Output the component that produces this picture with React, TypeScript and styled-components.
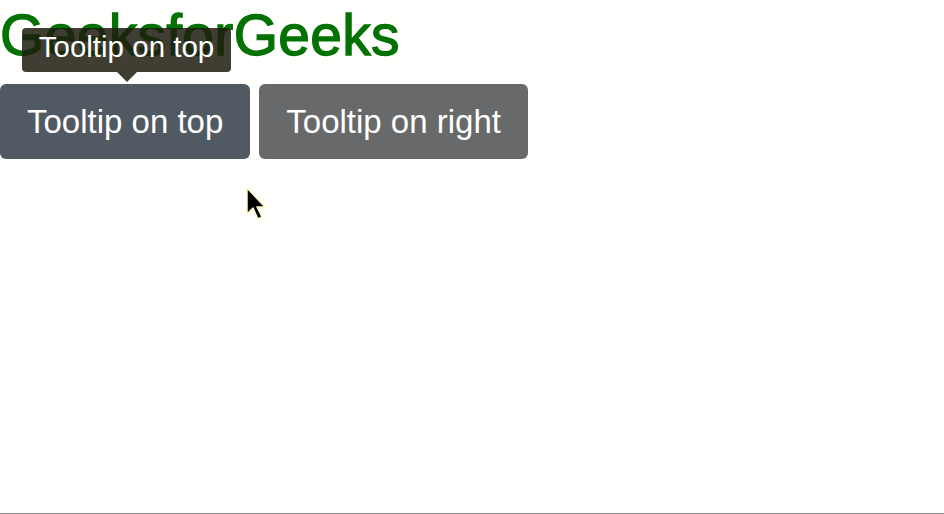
import React from 'react';
import styled, { createGlobalStyle } from 'styled-components';

const GlobalStyle = createGlobalStyle`
  html, body {
    margin: 0;
    padding: 0;
    background: #fffffe;
    font-family: "Liberation Sans", Arial, sans-serif;
  }
`;

const Page = styled.div`
  position: relative;
  height: 514px;
  box-sizing: border-box;
  border-bottom: 1px solid #8a8a8a;
  overflow: hidden;
`;

const Title = styled.h1`
  margin: 0 0 14px 0;
  font-size: 57px;
  line-height: 70px;
  font-weight: 400;
  color: #037203;
  -webkit-text-stroke: 1.3px #037203;
  letter-spacing: 0.3px;
`;

const ButtonRow = styled.div`
  display: flex;
  gap: 9px;
`;

const TipAnchor = styled.div`
  position: relative;
`;

const Button = styled.button<{ $active?: boolean }>`
  height: 75px;
  padding: 0 27px;
  border: none;
  border-radius: 6px;
  background: ${(p) => (p.$active ? '#515a62' : '#68696a')};
  color: #ffffff;
  font-family: "Liberation Sans", Arial, sans-serif;
  font-size: 33px;
  cursor: pointer;
`;

const Tooltip = styled.div`
  position: absolute;
  left: 22px;
  bottom: 100%;
  margin-bottom: 2px;
  width: 209px;
  height: 54px;
  display: flex;
  flex-direction: column;
  align-items: center;
`;

const TipBox = styled.div`
  width: 100%;
  height: 44px;
  border-radius: 4px;
  background: rgba(30, 28, 14, 0.85);
  color: #ffffff;
  font-size: 29.5px;
  display: flex;
  align-items: center;
  justify-content: center;
  padding-bottom: 7px;
  box-sizing: border-box;
`;

const TipArrow = styled.div`
  width: 0;
  height: 0;
  border-left: 10px solid transparent;
  border-right: 10px solid transparent;
  border-top: 10px solid rgba(30, 28, 14, 0.85);
  margin-left: 1px;
`;

const Pointer = styled.svg`
  position: absolute;
  left: 245px;
  top: 186px;
`;

export default function App() {
  return (
    <Page>
      <GlobalStyle />
      <Title>GeeksforGeeks</Title>
      <ButtonRow>
        <TipAnchor>
          <Tooltip>
            <TipBox>Tooltip on top</TipBox>
            <TipArrow />
          </Tooltip>
          <Button $active>Tooltip on top</Button>
        </TipAnchor>
        <Button>Tooltip on right</Button>
      </ButtonRow>
      <Pointer width="26" height="38" viewBox="0 0 26 38">
        <path
          d="M2 2 L2 28 L8 22 L13 33 L17 31 L12 21 L20 21 Z"
          fill="#000"
          stroke="#fff8c8"
          strokeWidth="1.5"
          strokeLinejoin="round"
        />
      </Pointer>
    </Page>
  );
}
